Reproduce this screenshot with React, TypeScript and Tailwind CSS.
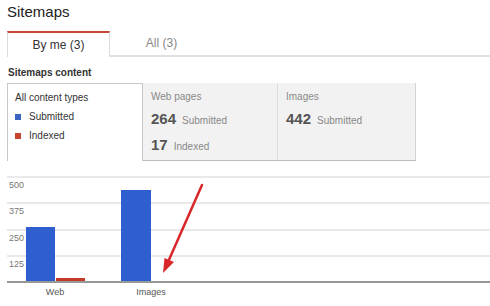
import React from "react";

const font = { fontFamily: '"Liberation Sans", Arial, sans-serif' };

function Legend({ color, label }: { color: string; label: string }) {
  return (
    <div className="flex h-[19px] items-center gap-[8px]">
      <span className={`h-[6px] w-[6px] ${color}`} />
      <span>{label}</span>
    </div>
  );
}

function Stat({ value, label }: { value: string; label: string }) {
  return (
    <div className="flex items-baseline gap-[6px] leading-[22px]">
      <span className="text-[15px] font-bold text-[#555]">{value}</span>
      <span className="text-[10px] text-[#888]">{label}</span>
    </div>
  );
}

function Chart() {
  const grid = [7, 33, 60, 86];
  const ticks = ["500", "375", "250", "125"];
  return (
    <svg width="490" height="136" viewBox="0 0 490 136" className="block">
      {grid.map((y, i) => (
        <g key={y}>
          <line x1="7" x2="490" y1={y} y2={y} stroke="#e2e2e2" strokeWidth="1.5" />
          <text x="9" y={y + 11} fontSize="9" fill="#777" fontFamily="Liberation Sans, Arial, sans-serif">
            {ticks[i]}
          </text>
        </g>
      ))}
      <rect x="26" y="57" width="29" height="55" fill="#2f5fcf" />
      <rect x="56" y="108" width="29" height="4" fill="#c23b2a" />
      <rect x="121" y="20" width="30" height="92" fill="#2f5fcf" />
      <line x1="7" x2="490" y1="112" y2="112" stroke="#999" strokeWidth="2" />
      <text x="55" y="125" fontSize="9" fill="#555" textAnchor="middle" fontFamily="Liberation Sans, Arial, sans-serif">
        Web
      </text>
      <text x="151" y="125" fontSize="9" fill="#555" textAnchor="middle" fontFamily="Liberation Sans, Arial, sans-serif">
        Images
      </text>
      {/* annotation arrow */}
      <line x1="202" y1="15" x2="168" y2="92" stroke="#d8262a" strokeWidth="2.5" strokeLinecap="round" />
      <polygon points="163,103 174,92 164.5,88" fill="#d8262a" />
    </svg>
  );
}

export default function App() {
  return (
    <div className="h-[306px] w-[490px] overflow-hidden bg-white text-[#333]" style={font}>
      <div className="h-[31px] pl-[7px] pt-[2px] text-[15px] leading-[20px] text-[#222]">Sitemaps</div>

      <div className="flex h-[26px] pl-[7px]">
        <div className="flex w-[103px] items-center justify-center border-x border-t-2 border-x-[#dadada] border-t-[#c24a36] bg-white text-[12px] text-[#333]">
          By me (3)
        </div>
        <div className="flex flex-1 border-b-2 border-[#e2e2e2]">
          <div className="flex w-[103px] items-center justify-center text-[12px] text-[#888]">All (3)</div>
        </div>
      </div>

      <div className="mt-[9px] h-[14px] pl-[8px] text-[10px] font-bold leading-[14px] text-[#333]">
        Sitemaps content
      </div>

      <div className="mt-[3px] flex h-[78px] pl-[7px]">
        <div className="w-[136px] border-x border-t border-[#c8c8c8] bg-white pl-[7px] pt-[4px] text-[10px] text-[#333]">
          <div className="h-[19px] leading-[19px]">All content types</div>
          <Legend color="bg-[#3a63c2]" label="Submitted" />
          <Legend color="bg-[#c8442c]" label="Indexed" />
        </div>
        <div className="flex h-[78px] border-b border-[#bdbdbd]">
          <div className="w-[135px] border-r border-[#dedede] bg-[#f2f2f2] pl-[8px] pt-[7px]">
            <div className="text-[10px] leading-[14px] text-[#888]">Web pages</div>
            <div className="mt-[4px]">
              <Stat value="264" label="Submitted" />
            </div>
            <div className="mt-[2px]">
              <Stat value="17" label="Indexed" />
            </div>
          </div>
          <div className="w-[138px] border-r border-[#d4d4d4] bg-[#f2f2f2] pl-[8px] pt-[7px]">
            <div className="text-[10px] leading-[14px] text-[#888]">Images</div>
            <div className="mt-[4px]">
              <Stat value="442" label="Submitted" />
            </div>
          </div>
        </div>
      </div>

      <div className="mt-[9px]">
        <Chart />
      </div>
    </div>
  );
}
